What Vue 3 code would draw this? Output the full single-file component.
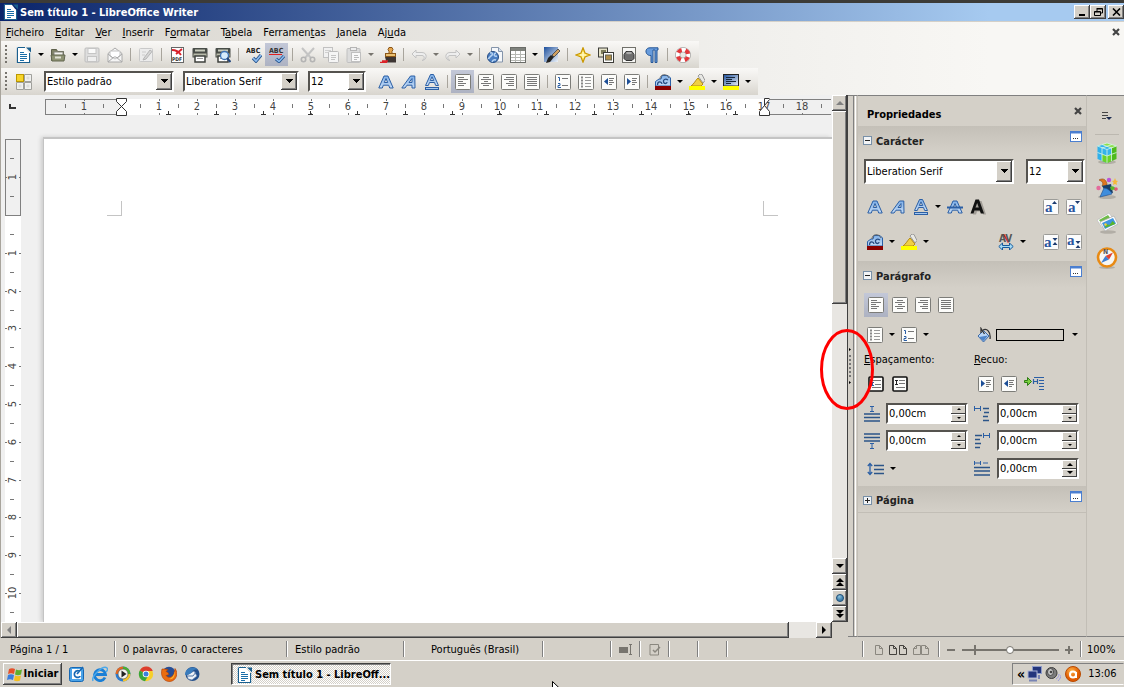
<script setup>
import { ref, h } from 'vue'

const menus = [
  ['', 'F', 'icheiro'], ['', 'E', 'ditar'], ['', 'V', 'er'], ['', 'I', 'nserir'], ['F', 'o', 'rmatar'],
  ['T', 'a', 'bela'], ['Ferramen', 't', 'as'], ['', 'J', 'anela'], ['Aj', 'u', 'da'],
]

// Letters that some icons carry over their symbol.
const sans = { 'font-weight': 700 }
const serif = { 'font-family': 'Liberation Serif, serif', 'font-weight': 700, 'font-size': 15, fill: '#2a55a0' }
const letters = {
  pdf: ['PDF', { ...sans, x: 3, y: 14, 'font-size': 5, fill: '#333' }],
  spell: ['ABC', { ...sans, x: 0, y: 6, 'font-size': 7, fill: '#222' }],
  autospell: ['ABC', { ...sans, x: 0, y: 6, 'font-size': 7, fill: '#333' }],
  spacing: ['AV', { ...sans, x: 1, y: 8, 'font-size': 10, fill: '#555' }],
  grow: ['a', { ...serif, x: 2, y: 13 }],
  shrink: ['a', { ...serif, x: 2, y: 13 }],
  super: ['a', { ...serif, x: 1, y: 13 }],
  sub: ['a', { ...serif, x: 1, y: 11 }],
  compass: ['N', { ...sans, x: 5, y: 5, 'font-size': 5, fill: '#555' }],
}
const Icon = ({ name }) => h('svg', { class: 'icon', viewBox: '0 0 16 16', 'aria-hidden': 'true' }, [
  h('use', { href: '#' + name }),
  letters[name] ? h('text', letters[name][1], letters[name][0]) : null,
])
Icon.props = ['name']

const t = (icon, label, opt = {}) => ({ icon, label, ...opt })
const sep = { sep: true }

const standardBar = [
  t('new', 'Novo', { drop: true }), t('open', 'Abrir', { drop: true }), t('save', 'Guardar', { off: true }), t('mail', 'Enviar', { off: true }), sep,
  t('edit', 'Editar modo', { off: true }), sep,
  t('pdf', 'Exportar PDF'), t('print', 'Imprimir'), t('preview', 'Pré-visualizar'), sep,
  t('spell', 'Ortografia'), t('autospell', 'Verificação automática', { on: true }), sep,
  t('cut', 'Cortar', { off: true }), t('copy', 'Copiar', { off: true }), t('paste', 'Colar', { off: true, drop: true }), t('brush', 'Clonar formatação'), sep,
  t('undo', 'Desfazer', { off: true, drop: true }), t('redo', 'Refazer', { off: true, drop: true }), sep,
  t('link', 'Hiperligação'), t('table', 'Tabela', { drop: true }), t('draw', 'Desenho'), sep,
  t('star', 'Navegador'), t('gallery', 'Galeria'), t('sources', 'Fontes de dados'), t('pilcrow', 'Caracteres não imprimíveis'), sep,
  t('help', 'Ajuda'),
]

const formatBar = [
  t('bold', 'Negrito'), t('italic', 'Itálico'), t('underline', 'Sublinhado'), sep,
  t('left', 'Esquerda', { on: true }), t('center', 'Centro'), t('right', 'Direita'), t('justify', 'Justificado'), sep,
  t('numbers', 'Numeração'), t('bullets', 'Marcas'), t('outdent', 'Diminuir recuo'), t('indent', 'Aumentar recuo'), sep,
  t('fontcolor', 'Cor do tipo de letra', { drop: true }), t('highlight', 'Realce', { drop: true }), t('backcolor', 'Cor de fundo', { drop: true }),
]

const cm = 37.8
const hNumbers = [-1, ...Array.from({ length: 18 }, (_, i) => i + 1)].map(n => ({ n: Math.abs(n), at: Math.round(121.5 + n * cm) }))
const hHalves = Array.from({ length: 21 }, (_, i) => Math.round(121.5 + (i - 1.5) * cm)).filter(v => v > 50)
const tabs = Array.from({ length: 13 }, (_, i) => Math.round(121 + (i + 1) * 47.25))
const vNumbers = [-1, 1, 2, 3, 4, 5, 6, 7, 8, 9, 10].map(n => ({ n: Math.abs(n), at: Math.round(120 + n * cm) }))
const vHalves = Array.from({ length: 13 }, (_, i) => Math.round(120 + (i - 1.5) * cm))

const decks = ['cube', 'stars', 'photos', 'compass']
const launch = ['outlook', 'ie', 'media', 'chrome', 'firefox', 'thunder']

const style = ref('Estilo padrão')
const font = ref('Liberation Serif')
const size = ref('12')
const zoom = ref(50)
const spacing = [
  ['above', 'Espaçamento acima'], ['before', 'Recuo antes'], ['below', 'Espaçamento abaixo'], ['after', 'Recuo depois'],
]
</script>

<template>
  <div class="desktop">
    <svg class="defs" aria-hidden="true">
      <defs>
        <linearGradient id="blue" x2="0" y2="1"><stop stop-color="#7fb0e8" /><stop offset="1" stop-color="#c6dcf6" /></linearGradient>
        <linearGradient id="dark" x2="1" y2="1"><stop stop-color="#1d4f9c" /><stop offset="1" stop-color="#eef4fa" /></linearGradient>
        <radialGradient id="orange" cx=".4" cy=".3"><stop stop-color="#ffb347" /><stop offset="1" stop-color="#e05a00" /></radialGradient>
        <radialGradient id="sky" cx=".4" cy=".3"><stop stop-color="#8fc4de" /><stop offset="1" stop-color="#3f80ae" /></radialGradient>
      </defs>
      <symbol id="new" viewBox="0 0 16 16"><path d="M2 .5h7M13.500 6v9.500h-12V.5" fill="#fff" stroke="#1a5f8e" stroke-width="1.300" /><path d="M2 1h7l4 5v9H2z" fill="#fff" /><path d="M10 .5h5v5z" fill="#1a5f8e" /><path d="M4 5.500h4M4 7.500h7M4 9.500h7M4 11.500h7M4 13.500h4" stroke="#1a6ea8" /></symbol>
      <symbol id="open" viewBox="0 0 16 16"><path d="M1.500 13.500v-11h5l1 2h6v9z" fill="#7d8164" stroke="#5d604b" /><rect x="4" y="5" width="9" height="5" fill="#f2f2ee" stroke="#8a8a80" /><path d="M1 8h14l-1 6H2z" fill="#8f9475" stroke="#62664f" /><path d="M5 10.500h6" stroke="#dfe0d4" stroke-width="2" /></symbol>
      <symbol id="save" viewBox="0 0 16 16"><rect x="1" y="1" width="14" height="14" rx="1" fill="#dedede" stroke="#bdbdbd" /><rect x="4" y="1.500" width="8" height="5" fill="#fafafa" stroke="#c5c5c5" /><rect x="3.500" y="9.500" width="9" height="5" fill="#efefef" stroke="#c5c5c5" /></symbol>
      <symbol id="mail" viewBox="0 0 16 16"><path d="M1 6.500 8 1l7 5.500V15H1z" fill="#f5f5f5" stroke="#aaa" /><path d="M3 4h10v5l-5 3-5-3z" fill="#fff" stroke="#c2c2c2" /><path d="m1 15 6-5h2l6 5M1 7l5 4M15 7l-5 4" fill="none" stroke="#aaa" /></symbol>
      <symbol id="edit" viewBox="0 0 16 16"><rect x="1.500" y="1.500" width="13" height="13" rx="1" fill="#ececec" stroke="#c9c9c9" /><path d="m6 11 6-8 2 1.500L8 12l-3 1z" fill="#d6d6d6" stroke="#b5b5b5" /><path d="M4 5h4M4 8h3" stroke="#ccc" /></symbol>
      <symbol id="pdf" viewBox="0 0 16 16"><rect x="2.500" y=".5" width="12" height="15" fill="#fff" stroke="#666" /><path d="M3 3c4 0 7 2 9 5m1-6-6 5" stroke="#d8202a" stroke-width="1.800" fill="none" /></symbol>
      <symbol id="print" viewBox="0 0 16 16"><rect x=".5" y="1" width="15" height="5" rx="1" fill="#484d49" /><path d="M3 3.500h10" stroke="#c9ccbd" stroke-width="2" /><rect x="1" y="6" width="14" height="4" fill="#b8bbaa" stroke="#4a4d46" /><rect x="3" y="9" width="10" height="6" fill="#fff" stroke="#3e403c" stroke-width="1.500" /><path d="M5 11.500h6" stroke="#999" /></symbol>
      <symbol id="preview" viewBox="0 0 16 16"><use href="#print" /><circle cx="9.500" cy="8.500" r="4" fill="#d6ebfb" stroke="#3b71b5" stroke-width="1.300" /><path d="m12 11 3.500 4" stroke="#23467c" stroke-width="2" /></symbol>
      <symbol id="spell" viewBox="0 0 16 16"><path d="m7 11 3 3 5-6" fill="none" stroke="#26558f" stroke-width="3.400" /><path d="m7 11 3 3 5-6" fill="none" stroke="#8ebdf0" stroke-width="1.600" /></symbol>
      <symbol id="autospell" viewBox="0 0 16 16"><path d="m0 8 1-1 1 1 1-1 1 1 1-1 1 1 1-1 1 1 1-1 1 1 1-1 1 1 1-1" fill="none" stroke="#e02020" /><path d="m7 12 3 2.500 5-5.500" fill="none" stroke="#26558f" stroke-width="3.200" /><path d="m7 12 3 2.500 5-5.500" fill="none" stroke="#8ebdf0" stroke-width="1.500" /></symbol>
      <symbol id="cut" viewBox="0 0 16 16"><path d="m2 1 9 10M14 1 5 11" stroke="#c4c4c4" stroke-width="2" /><circle cx="3.500" cy="12.500" r="2.200" fill="none" stroke="#b4b4b4" stroke-width="1.600" /><circle cx="12.500" cy="12.500" r="2.200" fill="none" stroke="#b4b4b4" stroke-width="1.600" /></symbol>
      <symbol id="copy" viewBox="0 0 16 16"><rect x=".5" y=".5" width="9" height="10" fill="#f1f1f1" stroke="#c1c1c1" /><path d="M2 3.500h6M2 5.500h6" stroke="#d0d0d0" /><rect x="5.500" y="4.500" width="10" height="11" rx="1" fill="#f5f5f5" stroke="#bcbcbc" /><path d="M8 8.500h5M8 10.500h5M8 12.500h4" stroke="#c4c4c4" /></symbol>
      <symbol id="paste" viewBox="0 0 16 16"><rect x="1" y="1.500" width="13" height="14" rx="1" fill="#dcdcdc" stroke="#c0c0c0" /><rect x="4.500" y=".5" width="6" height="3" fill="#eee" stroke="#b5b5b5" /><rect x="5.500" y="5.500" width="9" height="9" fill="#fafafa" stroke="#c0c0c0" /><path d="M8 8.500h4M8 10.500h5M8 12.500h3" stroke="#bbb" /></symbol>
      <symbol id="brush" viewBox="0 0 16 16"><path d="M9 .5h3l1 2-1 2v3H9v-3l-1-2z" fill="#e5a64d" stroke="#8b5719" /><rect x="5.500" y="6.500" width="10" height="3" fill="#eac072" stroke="#8b5719" /><path d="M5 10h11v5.500H4l2-2z" fill="#3c3432" /><path d="M0 15.500h7M2 14h6" stroke="#dc2228" stroke-width="1.500" /></symbol>
      <symbol id="undo" viewBox="0 0 16 16"><path d="M5 3 1 7l4 4V8.500h6c3 0 3 4 0 5 5 0 6-8 0-8H5z" fill="#eee" stroke="#c3c3c3" /></symbol>
      <symbol id="redo" viewBox="0 0 16 16"><use href="#undo" transform="matrix(-1 0 0 1 16 0)" /></symbol>
      <symbol id="link" viewBox="0 0 16 16"><path d="M4.500 15V.5h7l4 4V15z" fill="#f5f7fa" stroke="#8494aa" /><path d="M11.500.5v4h4" fill="#d6dfeb" stroke="#8494aa" /><circle cx="6" cy="10" r="5.500" fill="#4b7ec2" stroke="#274d83" /><path d="M3 6c3-1 3 2 1 3s-1 3-3 2m8-5c-3 1-2 4 1 3m-5 6c1-3 4-2 4-2" fill="none" stroke="#b7d4f3" stroke-width="1.400" /></symbol>
      <symbol id="table" viewBox="0 0 16 16"><rect x=".5" y=".5" width="15" height="15" fill="#fff" stroke="#6a6c68" /><path d="M1 2.500h14" stroke="#7f827c" stroke-width="3" /><path d="M1 7.500h14M1 10.500h14M1 13.500h14M5.500 4v11M10.500 4v11" stroke="#b5b7b2" /></symbol>
      <symbol id="draw" viewBox="0 0 16 16"><rect x="0" y="0" width="14" height="15" fill="url(#dark)" /><path d="m8 8 6-6 2 2-6 6z" fill="#d0a060" stroke="#555" /><path d="m7 8 3 2-4 5-4 1 2-5z" fill="#222" /></symbol>
      <symbol id="star" viewBox="0 0 16 16"><path d="m8 .8 2 5.200 5.200 2-5.200 2-2 5.200L6 10 .8 8 6 6z" fill="#ffe868" stroke="#c99700" stroke-width="1.200" /><path d="M8 5v6M5 8h6" stroke="#fffbd5" /></symbol>
      <symbol id="gallery" viewBox="0 0 16 16"><rect x=".5" y="1" width="9" height="9" fill="#e5e2c8" stroke="#3c3c38" /><rect x="3" y="3" width="5" height="4" fill="#7d7c5a" /><rect x="5.500" y="5.500" width="10" height="10" fill="#fff" stroke="#3c3c38" /><rect x="7.500" y="8" width="6" height="5" fill="#b08d46" stroke="#665" /></symbol>
      <symbol id="sources" viewBox="0 0 16 16"><rect x="1.500" y=".5" width="13" height="15" fill="#f7f7f5" stroke="#70706a" /><path d="M5 4.500h6l2 3v4l-2 2H5l-2-2v-4z" fill="#6e6e6e" stroke="#333" /><ellipse cx="8" cy="6" rx="3" ry="1.300" fill="#aaa" /></symbol>
      <symbol id="pilcrow" viewBox="0 0 16 16"><path d="M14 .8H6C0 .8 1 9 7 8.500V15.500h2V3h2v12.500h2V3h1z" fill="#679bdc" stroke="#265796" /></symbol>
      <symbol id="help" viewBox="0 0 16 16"><circle cx="8" cy="8" r="5.300" fill="none" stroke="#8a8a8a" stroke-width="5" /><circle cx="8" cy="8" r="5.300" fill="none" stroke="#fff" stroke-width="4" /><circle cx="8" cy="8" r="5.300" fill="none" stroke="#e2383b" stroke-width="4" stroke-dasharray="4.300 4.025" stroke-dashoffset="-2" /></symbol>
      <symbol id="styles" viewBox="0 0 16 16"><rect x=".5" y=".5" width="7" height="7" fill="#f7d42a" stroke="#bb9800" /><g fill="#f1f1ef" stroke="#a0a09c"><path d="M8.500.5h7v7h-7zM.5 8.500h7v7h-7zM8.500 8.500h7v7h-7z" /></g><path d="M10.500 2.500h3v3h-3zM2.500 10.500h3v3h-3zM10.500 10.500h3v3h-3z" fill="#dddddb" /></symbol>
      <symbol id="bold" viewBox="0 0 16 16"><path d="M.8 14 6 2h4l5.200 12h-3.500l-1-2.800H5.300L4.300 14z M6.300 8.500h3.400L8 4.500z" fill="url(#blue)" fill-rule="evenodd" stroke="#2b5fa5" /></symbol>
      <symbol id="italic" viewBox="0 0 16 16"><path d="M.8 14 9.500 2h4.300l.2 12h-3v-2.800H6L4 14z M8 8.500h3V4.500z" fill="url(#blue)" fill-rule="evenodd" stroke="#2b5fa5" /></symbol>
      <symbol id="underline" viewBox="0 0 16 16"><path d="M1.500 11.500 6.500.5h3l5 11h-2.800l-1.200-3h-5l-1.200 3z M6.300 6.500h3.400L8 2.800z" fill="url(#blue)" fill-rule="evenodd" stroke="#2b5fa5" /><rect x="1.500" y="13.500" width="13" height="2" fill="#a5c8f0" stroke="#2b5fa5" /></symbol>
      <symbol id="strike" viewBox="0 0 16 16"><use href="#bold" /><path d="M0 8.500h16" stroke="#2b5fa5" stroke-width="2" /></symbol>
      <symbol id="shadow" viewBox="0 0 16 16"><path d="M3 15.500 7.500 2h4L16 15.500h-3l-1-3H7l-1 3z" fill="#a19d96" /><path d="M.5 14.500 5.500.5H9l5 14h-3.200l-1-3H4.500l-1 3z M5.500 8.500h3.300L7.200 4z" fill="#111" fill-rule="evenodd" /></symbol>
      <symbol id="frame" viewBox="0 0 16 16"><rect x=".5" y=".5" width="15" height="15" rx="1" fill="#fcfcfa" stroke="#7c7c78" /></symbol>
      <symbol id="left" viewBox="0 0 16 16"><use href="#frame" /><path d="M3 3.500h6M3 5.500h10M3 7.500h5M3 9.500h8M3 11.500h6" stroke="#777" /></symbol>
      <symbol id="center" viewBox="0 0 16 16"><use href="#frame" /><path d="M5 3.500h6M3 5.500h10M6 7.500h4M3 9.500h10M5 11.500h6" stroke="#777" /></symbol>
      <symbol id="right" viewBox="0 0 16 16"><use href="#frame" /><path d="M5 3.500h8M3 5.500h10M8 7.500h5M5 9.500h8M7 11.500h6" stroke="#777" /></symbol>
      <symbol id="justify" viewBox="0 0 16 16"><use href="#frame" /><path d="M3 3.500h10M3 5.500h10M3 7.500h10M3 9.500h10M3 11.500h10" stroke="#777" /></symbol>
      <symbol id="numbers" viewBox="0 0 16 16"><use href="#frame" /><path d="M3 3.500h1.500V7M3 9.500h2v2H3v2h3" fill="none" stroke="#2b5fa5" /><path d="M7 4.500h6M7 11.500h6" stroke="#777" /></symbol>
      <symbol id="bullets" viewBox="0 0 16 16"><use href="#frame" /><path d="M3 3.500h2M3 6.500h2M3 9.500h2M3 12.500h2" stroke="#888" stroke-width="2" /><path d="M7 3.500h6M7 6.500h6M7 9.500h6M7 12.500h6" stroke="#999" /></symbol>
      <symbol id="outdent" viewBox="0 0 16 16"><use href="#frame" /><path d="M7 4v7L3 7.500z" fill="#1c4e96" /><path d="M8 4.500h5M8 6.500h4M8 8.500h5M8 10.500h3" stroke="#777" /></symbol>
      <symbol id="indent" viewBox="0 0 16 16"><use href="#frame" /><path d="M3 4v7l4-3.500z" fill="#1c4e96" /><path d="M8 4.500h5M8 6.500h4M8 8.500h5M8 10.500h3" stroke="#777" /></symbol>
      <symbol id="fontcolor" viewBox="0 0 16 16"><path d="M.5 12V7.500L4 5h2l1-3.500h6L15.500 4v8z" fill="url(#blue)" stroke="#2b5fa5" /><path d="M2.500 11c0-4 4-4 4.500-1M13 6c-3-2-5 0-4.500 2s3.500 2 3.500 0" fill="none" stroke="#274c83" stroke-width="1.300" /><path d="M5 5c0-5 7-6 9-1" fill="none" stroke="#666" /><rect y="12" width="16" height="4" fill="#8a0000" /></symbol>
      <symbol id="highlight" viewBox="0 0 16 16"><path d="m9 2 2-2 2 .5 3 6-2 2.500z" fill="#e8e8e4" stroke="#999" /><path d="m9 4 5 6-2 2H2c3-2 4-5 7-8z" fill="#f0d045" stroke="#b58a10" /><rect y="12" width="16" height="4" fill="#ff0" /></symbol>
      <symbol id="backcolor" viewBox="0 0 16 16"><rect x=".5" y=".5" width="15" height="11.500" fill="url(#dark)" stroke="#222" /><path d="M3 3.500h9M3 5.500h6M3 7.500h10M3 9.500h5" stroke="#17273c" /><rect y="12" width="16" height="4" fill="#ff0" /></symbol>
      <symbol id="spacing" viewBox="0 0 16 16"><path d="m5.500 0 5 8.500" stroke="#e32020" stroke-width="1.500" /><path d="M.8 12.500 4.500 9v2.500h7V9l3.700 3.500-3.700 3.500v-2.500h-7V16z" fill="#a6dbf5" stroke="#165a9c" /></symbol>
      <symbol id="grow" viewBox="0 0 16 16"><use href="#box" /><path d="M9 5 11.500 2 14 5z" fill="#1d3c70" /></symbol>
      <symbol id="shrink" viewBox="0 0 16 16"><use href="#box" /><path d="M9 2h5l-2.500 3z" fill="#1d3c70" /></symbol>
      <symbol id="super" viewBox="0 0 16 16"><use href="#box" /><path d="M9.500 4h5L12 7zM9.500 11h5L12 8z" fill="#1d3c70" /></symbol>
      <symbol id="sub" viewBox="0 0 16 16"><use href="#box" /><path d="M9.500 7h5L12 10zM9.500 14h5L12 11z" fill="#1d3c70" /></symbol>
      <symbol id="box" viewBox="0 0 16 16"><rect x=".5" y=".5" width="15" height="15" rx="1" fill="#fcfcfc" stroke="#9c9c98" /></symbol>
      <symbol id="bucket" viewBox="0 0 16 16"><path d="m2 9 5.500-5.500L13 9l-5.500 6z" fill="#b9d5f5" stroke="#3c6aa8" /><path d="m3 10 9-1.500-4.500 5.500z" fill="#4c83c8" /><path d="M5 6V1.500L8.500 7M7 3c4-2 8 2 7 9" fill="none" stroke="#333" stroke-width="1.300" /></symbol>
      <symbol id="inc" viewBox="0 0 16 16"><rect x="1" y="1" width="14" height="14" rx="1" fill="#fcfcfa" stroke="#111" stroke-width="1.600" /><path d="M4 4.500h9M7 8.500h6M4 11.500h9" stroke="#777" /><path d="M3 6.500h3M3 9.500h3M4.500 6v4" stroke="#2b5fa5" /></symbol>
      <symbol id="dec" viewBox="0 0 16 16"><rect x="1" y="1" width="14" height="14" rx="1" fill="#fcfcfa" stroke="#111" stroke-width="1.600" /><path d="M7 4.500h6M7 7.500h6M4 11.500h9" stroke="#777" /><path d="M3 4.500h3M3 8.500h3M4.500 5v4" stroke="#222" /></symbol>
      <symbol id="hanging" viewBox="0 0 20 16"><path d="M.5 4.500h3V1.500l4 4-4 4V6.500h-3z" fill="#7bd13f" stroke="#2f7d15" /><path d="M9.500 3v5M13.500 3v5M10 5.500h3M10 1.500h10M15 4.500h5M15 7.500h5M15 10.500h5M15 13.500h5" stroke="#2b5fa5" stroke-width="1.200" /></symbol>
      <symbol id="above" viewBox="0 0 16 16"><path d="M6 .5h4M6 5.500h4M8 1v5" stroke="#2b5fa5" /><path d="M0 8h16M0 11.500h16M0 15h16" stroke="#2b5488" stroke-width="1.600" /></symbol>
      <symbol id="below" viewBox="0 0 16 16"><path d="M6 10.500h4M6 15.500h4M8 11v5" stroke="#2b5fa5" /><path d="M0 1h16M0 4.500h16M0 8h16" stroke="#2b5488" stroke-width="1.600" /></symbol>
      <symbol id="before" viewBox="0 0 16 16"><path d="M.5 0v5M6.500 0v5M1 2.500h6" stroke="#2b5fa5" /><path d="M9 2.500h6M10 6.500h5M9 10.500h5M9 14.500h6" stroke="#2b5488" stroke-width="1.500" /></symbol>
      <symbol id="after" viewBox="0 0 16 16"><path d="M9.500 0v5M15.500 0v5M10 2.500h6" stroke="#2b5fa5" /><path d="M1 2.500h7M1 6.500h5M1 10.500h6M1 14.500h5" stroke="#2b5488" stroke-width="1.500" /></symbol>
      <symbol id="first" viewBox="0 0 16 16"><path d="M.5 0v4M6.500 0v4M1 2h6M9 2h5" stroke="#2b5fa5" /><path d="M0 6.500h16M0 10h16M0 14h16" stroke="#2b5488" stroke-width="1.500" /></symbol>
      <symbol id="linesp" viewBox="0 0 18 16"><path d="M3 3v10M.8 5 3 2.500 5.200 5M.8 11 3 13.500 5.200 11" fill="none" stroke="#2b5fa5" stroke-width="1.300" /><path d="M7 4.500h10M7 8.500h10M7 12.500h10" stroke="#2b5488" stroke-width="1.500" /></symbol>
      <symbol id="launch" viewBox="0 0 12 11"><rect x=".5" y=".5" width="11" height="10" fill="#fff" stroke="#4b7fd0" /><path d="M0 1.500h12" stroke="#4b7fd0" stroke-width="2" /><path d="M3 7.500h1m1 0h1m1 0h1" stroke="#333" /></symbol>
      <symbol id="cross" viewBox="0 0 8 8"><path d="m1 1 6 6M7 1 1 7" stroke="#444" stroke-width="2.200" /></symbol>
      <symbol id="deckmenu" viewBox="0 0 10 10"><path d="M0 1.500h6M0 4.500h6M0 7.500h4" stroke="#444" /><path d="M4 6h6L7 9z" fill="#1b2b50" /></symbol>
      <symbol id="cube" viewBox="0 0 22 22"><ellipse cx="11" cy="20" rx="9" ry="2" fill="#b2aea6" /><path d="m1.500 4 9.500-3 9.500 3-9.500 3.500z" fill="#8fe04c" /><path d="M1.500 4v13l9.500 4V7.500z" fill="#2fb0ea" /><path d="m20.500 4-9.500 3.500V21l9.500-4z" fill="#4ebb1c" /><path d="M1.500 4 6 2.500l9.500 3.500v6.500L11 14z" fill="#35b3ec" /><path d="m11 14 4.500-2v7L11 21l-5-2v-7z" fill="#6ad22c" /><path d="m1.500 4 9.500-3 9.500 3-9.500 3.500zM11 7.500V21M1.500 10.500 11 14l9.500-3.500M6 5.500v13.500M15.500 5.500v13.500M6 2.500 15.500 6M16 2.500 6 6" fill="none" stroke="#d8f5ea" stroke-width=".8" /></symbol>
      <symbol id="stars" viewBox="0 0 22 22"><ellipse cx="11" cy="20" rx="9" ry="2" fill="#b2aea6" /><path d="M3 3c5-3 8 1 8 5L6 9C8 6 6 4 3 3z" fill="#e07820" stroke="#8c4810" stroke-width=".6" /><path d="m6 9 9-2 2 9-7-1z" fill="#173f68" /><path d="m4 20 4-9c3 0 7 3 8 6z" fill="#3f8ddc" stroke="#1c4a88" stroke-width=".6" /><path d="M14 10c4-2 6 1 6 4-2-2-4-1-5-1z" fill="#58b72c" /><circle cx="13" cy="3" r="2.200" fill="#bb55d8" /><path d="m19 1 1 2.500 2 .5-1.500 1.500.5 2.500-2-1-2 1 .5-2.500L16 4l2-.5z" fill="#f5b83a" /><circle cx="2.500" cy="11" r="2.200" fill="#e46a9c" /><circle cx="20" cy="12" r="1.800" fill="#e2557a" /></symbol>
      <symbol id="photos" viewBox="0 0 22 22"><ellipse cx="12" cy="20" rx="8" ry="1.800" fill="#b2aea6" /><path d="m1 8 12-7 6 8-13 7z" fill="#fdfdfd" stroke="#bbb" stroke-width=".7" /><path d="m3 8 9-5 3 4-9 5z" fill="#6fbb4a" /><path d="m4 10 14-6 4 8-13 7z" fill="#fdfdfd" stroke="#aaa" stroke-width=".7" /><path d="m6 11 11-5 3 5.500-11 5.500z" fill="#3f95e0" /><path d="m8.500 16 2-4 3 1 3-4 3 3z" fill="#5ab52a" /><path d="m8 12 2-1 1 2-2 1z" fill="#f4d040" /></symbol>
      <symbol id="compass" viewBox="0 0 22 22"><ellipse cx="11" cy="20.500" rx="8" ry="1.500" fill="#b2aea6" /><circle cx="11" cy="10.500" r="9" fill="#f6f6f4" stroke="#e88a14" stroke-width="2.600" /><path d="m17 5.500-4 7-3.500-3.500z" fill="#e04030" /><path d="m5 16 4.500-7 3.500 3.500z" fill="#3d7ed0" /></symbol>
      <symbol id="outlook" viewBox="0 0 16 16"><rect x=".5" y="1.500" width="14" height="14" rx="2" fill="#4aa3e8" stroke="#1768b4" /><rect x="3" y="3" width="9" height="10" fill="#fff" /><path d="M11 5c-6-2-7 5-4 6 2 1 4 0 4-1M8 8l6-7" fill="none" stroke="#1768b4" stroke-width="1.700" /></symbol>
      <symbol id="ie" viewBox="0 0 16 16"><path d="M13 11.500A5.500 5.500 0 1 1 13.500 8.500H4" fill="none" stroke="#1a7fd6" stroke-width="2.800" /><path d="M1 15C-1 10 11-1 15 2c1 1 0 3-1 4" fill="none" stroke="#4ba8ea" stroke-width="1.500" /></symbol>
      <symbol id="media" viewBox="0 0 16 16"><circle cx="8" cy="8" r="7.500" fill="#2b7bd0" /><path d="M8 8V.5A7.500 7.500 0 0 1 15.500 8z" fill="#4cb030" /><path d="M8 8h7.500A7.500 7.500 0 0 1 8 15.500z" fill="#f5c32a" /><path d="M8 8H.5A7.500 7.500 0 0 1 8 .5z" fill="#e56820" /><circle cx="8" cy="8" r="5" fill="#f4f4ef" stroke="#555" stroke-width=".7" /><path d="m6.500 4.500 5 3.500-5 3.500z" fill="#222" /></symbol>
      <symbol id="chrome" viewBox="0 0 16 16"><circle cx="8" cy="8" r="7.200" fill="#f7cf2a" /><path d="M8 8 1.800 4.400A7.200 7.200 0 0 1 14.800 5H8z" fill="#dc3e2e" /><path d="m8 8-6.200-3.600A7.200 7.200 0 0 0 7 15.200L10 10z" fill="#36a53e" /><circle cx="8" cy="8" r="3.300" fill="#fff" /><circle cx="8" cy="8" r="2.500" fill="#3c80dd" /></symbol>
      <symbol id="firefox" viewBox="0 0 16 16"><circle cx="8" cy="7.500" r="6.800" fill="#274e95" /><path d="M1 3c-2 7 2 13 8 12.500 6-.5 9-8 5-13 0 3-1 3-1 5-1 4-6 5-8 2l3-1-1-2-2-1 2-2C5 3 3 3 1 3z" fill="#ea6d10" stroke="#b03c04" stroke-width=".6" /><path d="M12 2c3 5 0 10-4 11 4 1 8-3 4-11z" fill="#fbb630" /></symbol>
      <symbol id="thunder" viewBox="0 0 16 16"><circle cx="8.500" cy="8" r="7" fill="#234f8c" /><path d="m3 9 7-4 3 5-5 4-4-1z" fill="#eef2f8" stroke="#5576a4" stroke-width=".7" /><path d="M1 9c0-7 8-10 13-5-3-1-5 0-6 2S4 9 1 9z" fill="#3a7cbc" /><path d="m4 10 5 0 3-4" fill="none" stroke="#5576a4" /></symbol>
      <symbol id="windows" viewBox="0 0 16 16"><path d="M2 3c2-1 4-1 6 0L7 8C5 7 3 7 1 8z" fill="#e5502a" /><path d="M9 3.500c2 1 4 1 6 0l-1 5c-2 1-4 1-6 0z" fill="#5fae2c" /><path d="M1 9c2-1 4-1 6 0l-1 5c-2-1-4-1-6 0z" fill="#3b7ddc" /><path d="M8 9.500c2 1 4 1 6 0l-1 5c-2 1-4 1-6 0z" fill="#f5bf1e" /></symbol>
      <symbol id="network" viewBox="0 0 16 16"><rect x="5.500" y=".5" width="9" height="7" fill="#23357c" stroke="#8f9cc8" /><rect x="1" y="5" width="9" height="7" fill="#23357c" stroke="#aab3d8" /><path d="M2 14.500h8M12 9v4" stroke="#7984b4" stroke-width="2" /></symbol>
      <symbol id="speaker" viewBox="0 0 16 16"><circle cx="6.500" cy="7" r="5.500" fill="#7c7c7c" stroke="#3e3e3e" /><ellipse cx="5.500" cy="6" rx="3" ry="3.500" fill="#c7c7c7" stroke="#4a4a4a" /><circle cx="6" cy="6" r="1.300" fill="#444" /><path d="M11 13c2-1 3-3 3-5M13 15c2-2 3-4 3-6" fill="none" stroke="#9c9ce0" /></symbol>
      <symbol id="avast" viewBox="0 0 16 16"><circle cx="8" cy="8" r="7.500" fill="url(#orange)" stroke="#b84a00" /><circle cx="8" cy="8.500" r="3" fill="none" stroke="#fff" stroke-width="2" /><path d="M11 6v6" stroke="#fff" stroke-width="2" /></symbol>
    </svg>

    <header class="titlebar">
      <Icon name="new" />
      <h1>Sem título 1 - LibreOffice Writer</h1>
      <div class="controls">
        <button aria-label="Minimizar"><svg viewBox="0 0 9 8"><path d="M1 7h6" stroke="#000" stroke-width="2" /></svg></button>
        <button aria-label="Restaurar"><svg viewBox="0 0 9 8"><path d="M3 .5h5.500V5H6.500M3 1h5.500M3 0v3M.5 3.500h6v4h-6zM.5 4h6" fill="none" stroke="#000" /></svg></button>
        <button aria-label="Fechar" class="shut"><svg viewBox="0 0 9 8"><path d="m1 .5 7 7M8 .5l-7 7" stroke="#000" stroke-width="1.600" /></svg></button>
      </div>
    </header>

    <section class="chrome">
      <nav class="menubar">
        <a v-for="m in menus" :key="m[1] + m[2]" href="#">{{ m[0] }}<u>{{ m[1] }}</u>{{ m[2] }}</a>
        <button class="bare closedoc" aria-label="Fechar documento"><svg class="cross"><use href="#cross" /></svg></button>
      </nav>

      <div class="toolbar" role="toolbar" aria-label="Padrão">
        <i class="grip"></i>
        <template v-for="(b, i) in standardBar" :key="i">
          <i v-if="b.sep" class="sep"></i>
          <template v-else>
            <button class="tool" :class="{ on: b.on }" :aria-label="b.label" :disabled="b.off"><Icon :name="b.icon" /></button>
            <button v-if="b.drop" class="drop" :class="{ off: b.off }" :aria-label="b.label + ', opções'"></button>
          </template>
        </template>
      </div>

      <div class="toolbar" role="toolbar" aria-label="Formatação">
        <i class="grip"></i>
        <button class="tool" aria-label="Estilos"><Icon name="styles" /></button>
        <div class="combo w-style"><select v-model="style" aria-label="Estilo de parágrafo"><option>Estilo padrão</option></select></div>
        <div class="combo w-font"><select v-model="font" aria-label="Tipo de letra"><option>Liberation Serif</option></select></div>
        <div class="combo w-size"><select v-model="size" aria-label="Tamanho"><option>12</option></select></div>
        <template v-for="(b, i) in formatBar" :key="i">
          <i v-if="b.sep" class="sep"></i>
          <template v-else>
            <button class="tool" :class="{ on: b.on }" :aria-label="b.label"><Icon :name="b.icon" /></button>
            <button v-if="b.drop" class="drop" :aria-label="b.label + ', opções'"></button>
          </template>
        </template>
      </div>
    </section>

    <main class="work">
      <div class="editor">
        <div class="canvas">
          <svg class="hruler" aria-label="Régua horizontal">
            <rect x="121" y="4" width="644" height="16" fill="#fff" />
            <rect x="45.500" y="4.500" width="76" height="15" class="margin" />
            <rect x="764.500" y="4.500" width="120" height="15" class="margin" />
            <path class="stop" d="M10 9v4h6" />
            <g v-for="k in hNumbers" :key="k.at"><text :x="k.at" y="15">{{ k.n }}</text><path :d="`M${k.at + .5} 4v2m0 12v2`" /></g>
            <path v-for="x in hHalves" :key="x" :d="`M${x + .5} 9v4`" />
            <path v-for="x in tabs" :key="x" class="tab" :d="`M${x - 2} 19.500h5M${x + .5} 16v3`" />
            <path class="marker" d="M116.500 3.500h10v3l-10 10v4h10v-4l-10-10z" />
            <path class="marker" d="M764.500 10.500l5 6v4h-10v-4zM769.500 3.500h-5v7l5-6" />
          </svg>
          <svg class="vruler" aria-label="Régua vertical">
            <rect x="4" y="120" width="16" height="600" fill="#fff" />
            <rect x="4.500" y="44.500" width="15" height="76" class="margin" />
            <g v-for="k in vNumbers" :key="k.at"><text :transform="`translate(15 ${k.at}) rotate(-90)`">{{ k.n }}</text><path :d="`M4 ${k.at + .5}h2m12 0h2`" /></g>
            <path v-for="y in vHalves" :key="y" :d="`M9 ${y + .5}h4`" />
          </svg>
          <article class="page" contenteditable="true" aria-label="Documento">
            <i class="crop tl"></i><i class="crop tr"></i>
          </article>
        </div>
        <div class="vscroll">
          <button class="sb off" aria-label="Subir"><svg viewBox="0 0 8 4"><path d="m0 4 4-4 4 4z" fill="#808080" /></svg></button>
          <div class="thumb vt"></div>
          <i class="track"></i>
          <button class="sb" aria-label="Descer"><svg viewBox="0 0 8 4"><path d="m0 0 4 4 4-4z" /></svg></button>
          <button class="sb" aria-label="Página anterior"><svg class="tall" viewBox="0 0 8 8"><path d="m0 4 4-4 4 4zM0 8l4-4 4 4z" /></svg></button>
          <button class="sb" aria-label="Navegação"><svg class="tall" viewBox="0 0 8 8"><circle cx="4" cy="4" r="3.500" fill="url(#sky)" stroke="#234e74" /></svg></button>
          <button class="sb" aria-label="Página seguinte"><svg class="tall" viewBox="0 0 8 8"><path d="m0 0 4 4 4-4zM0 4l4 4 4-4z" /></svg></button>
        </div>
        <div class="hscroll">
          <button class="sb" aria-label="Esquerda"><svg class="side" viewBox="0 0 4 8"><path d="M4 0 0 4l4 4z" fill="#808080" /></svg></button>
          <div class="thumb ht"></div>
          <i class="track"></i>
          <button class="sb" aria-label="Direita"><svg class="side" viewBox="0 0 4 8"><path d="m0 0 4 4-4 4z" /></svg></button>
        </div>
      </div>

      <div class="splitter"><svg viewBox="0 0 4 36"><path d="M1 0l2 1.500L1 3zM1 33l2 1.500L1 36z" /><path d="M2 7v24" stroke="#777" stroke-width="2" stroke-dasharray="2 2" /></svg></div>

      <aside class="deck">
        <div class="deckhead"><h2>Propriedades</h2><button class="bare" aria-label="Fechar painel"><svg class="cross"><use href="#cross" /></svg></button></div>

        <div class="head"><button class="toggle" aria-label="Recolher"></button><h3>Carácter</h3><button class="bare more" aria-label="Mais opções"><svg><use href="#launch" /></svg></button></div>
        <div class="panel chars">
          <div class="row fonts">
            <div class="combo big grow"><select v-model="font" aria-label="Tipo de letra"><option>Liberation Serif</option></select></div>
            <div class="combo big w-size2"><select v-model="size" aria-label="Tamanho"><option>12</option></select></div>
          </div>
          <div class="row tools">
            <button class="tool" aria-label="Negrito"><Icon name="bold" /></button>
            <button class="tool" aria-label="Itálico"><Icon name="italic" /></button>
            <button class="tool" aria-label="Sublinhado"><Icon name="underline" /></button><button class="drop" aria-label="Opções de sublinhado"></button>
            <button class="tool" aria-label="Rasurado"><Icon name="strike" /></button>
            <button class="tool" aria-label="Sombra"><Icon name="shadow" /></button>
            <button class="tool push" aria-label="Aumentar"><Icon name="grow" /></button>
            <button class="tool" aria-label="Diminuir"><Icon name="shrink" /></button>
          </div>
          <div class="row tools">
            <button class="tool" aria-label="Cor"><Icon name="fontcolor" /></button><button class="drop" aria-label="Opções de cor"></button>
            <button class="tool" aria-label="Realce"><Icon name="highlight" /></button><button class="drop" aria-label="Opções de realce"></button>
            <button class="tool push" aria-label="Espaçamento"><Icon name="spacing" /></button><button class="drop kern" aria-label="Opções de espaçamento"></button>
            <button class="tool" aria-label="Sobrescrito"><Icon name="super" /></button>
            <button class="tool" aria-label="Subscrito"><Icon name="sub" /></button>
          </div>
        </div>

        <div class="head"><button class="toggle" aria-label="Recolher"></button><h3>Parágrafo</h3><button class="bare more" aria-label="Mais opções"><svg><use href="#launch" /></svg></button></div>
        <div class="panel para">
          <div class="row aligns">
            <button class="tool on" aria-label="Esquerda"><Icon name="left" /></button>
            <button class="tool" aria-label="Centro"><Icon name="center" /></button>
            <button class="tool" aria-label="Direita"><Icon name="right" /></button>
            <button class="tool" aria-label="Justificado"><Icon name="justify" /></button>
          </div>
          <div class="halves lists">
            <div class="row nudge"><button class="tool" aria-label="Marcas"><Icon name="bullets" /></button><button class="drop" aria-label="Opções de marcas"></button><button class="tool" aria-label="Numeração"><Icon name="numbers" /></button><button class="drop" aria-label="Opções de numeração"></button></div>
            <div class="row"><button class="tool narrow" aria-label="Fundo do parágrafo"><Icon name="bucket" /></button><i class="swatch"></i><button class="drop wide" aria-label="Opções de fundo"></button></div>
          </div>
          <div class="halves captions"><span><u>E</u>spaçamento:</span><span><u>R</u>ecuo:</span></div>
          <div class="halves spaces">
            <div class="row"><button class="tool first" aria-label="Aumentar espaçamento"><Icon name="inc" /></button><button class="tool" aria-label="Diminuir espaçamento"><Icon name="dec" /></button></div>
            <div class="row"><button class="tool" aria-label="Aumentar recuo"><Icon name="indent" /></button><button class="tool" aria-label="Diminuir recuo"><Icon name="outdent" /></button><button class="tool hang" aria-label="Recuo pendente"><svg><use href="#hanging" /></svg></button></div>
          </div>
          <div class="fields">
            <template v-for="s in spacing" :key="s[0]">
              <Icon :name="s[0]" />
              <div class="spin"><input value="0,00cm" :aria-label="s[1]"><div><button class="up" aria-label="Mais"></button><button aria-label="Menos"></button></div></div>
            </template>
            <div class="row linesp"><button class="bare" aria-label="Espaçamento de linhas"><svg><use href="#linesp" /></svg></button><button class="drop" aria-label="Opções de linhas"></button></div>
            <Icon name="first" />
            <div class="spin strong"><input value="0,00cm" aria-label="Recuo da primeira linha"><div><button class="up" aria-label="Mais"></button><button aria-label="Menos"></button></div></div>
          </div>
        </div>

        <div class="head last"><button class="toggle plus" aria-label="Expandir"></button><h3>Página</h3><button class="bare more" aria-label="Mais opções"><svg><use href="#launch" /></svg></button></div>
      </aside>

      <nav class="decktabs">
        <button class="bare menu" aria-label="Definições"><svg><use href="#deckmenu" /></svg></button>
        <button v-for="d in decks" :key="d" class="bare" :aria-label="d"><Icon :name="d" /></button>
      </nav>

      <svg class="highlight" viewBox="0 0 54 81" aria-hidden="true"><ellipse cx="27" cy="40.500" rx="25.500" ry="39" fill="none" stroke="#f00" stroke-width="3" /></svg>
    </main>

    <footer class="status">
      <span class="s-page">Página 1 / 1</span><span class="s-words">0 palavras, 0 caracteres</span><span class="s-style">Estilo padrão</span>
      <span class="s-lang">Português (Brasil)</span><span class="s-gap"></span>
      <span class="s-cell"><svg viewBox="0 0 14 12"><path d="M0 3h9v6H0z" fill="#77746e" /><path d="M10 .5h3M10 10.500h3M11.500 1v10" stroke="#77746e" /></svg></span>
      <span class="s-cell"><svg viewBox="0 0 14 12"><path d="M2 .5h8.500v10.500H2z" fill="none" stroke="#8a877f" /><path d="m5 6 2 2 5-5" fill="none" stroke="#8a877f" stroke-width="1.500" /></svg></span>
      <span class="s-cell"></span><span class="s-cell"></span><span class="s-rest"></span>
      <span class="s-views"><svg viewBox="0 0 54 12" fill="none" stroke="#8a877f"><path d="M.5 1.500h4l3 3v6h-7zM4.500 1.500v3h3" /><path d="M14.500 1.500h4l3 3v6h-7zM18.500 1.500v3h3M24.500 1.500h4l3 3v6h-7zM28.500 1.500v3h3" stroke="#44423e" /><path d="M38.500 4.500l3-3h4v9h-7zM41.500 1.500v3h-3M46.500 1.500h4l3 3v6h-7zM50.500 1.500v3h3" /></svg></span>
      <span class="s-zoom"><button class="bare minus" aria-label="Reduzir"></button><input v-model="zoom" type="range" min="0" max="100" aria-label="Ampliação"><button class="bare plus" aria-label="Ampliar"></button></span>
      <span class="s-pct">100%</span>
    </footer>

    <footer class="taskbar">
      <button class="start"><Icon name="windows" />Iniciar</button>
      <div class="launch"><button v-for="l in launch" :key="l" class="bare" :aria-label="l"><Icon :name="l" /></button></div>
      <button class="task"><Icon name="new" /><span>Sem título 1 - LibreOff...</span></button>
      <div class="tray"><span class="chev">«</span><Icon name="network" /><Icon name="speaker" /><Icon name="avast" /><time>13:06</time></div>
      <svg class="pointer" viewBox="0 0 12 18" aria-hidden="true"><path d="M.5.5v14l3.500-3 2.500 5 2-1-2.500-5H11z" fill="#fff" stroke="#000" /></svg>
    </footer>
  </div>
</template>

<style>
html, body { overflow: hidden; }
</style>

<style scoped>
.desktop {
  --face: #d4d0c8;
  position: relative;
  display: flex;
  flex-direction: column;
  min-height: 100vh;
  box-sizing: border-box;
  overflow: hidden;
  border-top: 3px solid #3c3b37;
  background: var(--face);
  font: 11px/14px "DejaVu Sans Condensed", "DejaVu Sans", sans-serif;
  color: #000;
}
.desktop *, .desktop *::before, .desktop *::after { box-sizing: border-box; }
.defs { position: absolute; width: 0; height: 0; }
h1, h2, h3 { margin: 0; font-size: 11px; font-weight: 700; }
i { font-style: normal; }
button, input, select { font: inherit; color: inherit; margin: 0; padding: 0; border: 0; background: none; border-radius: 0; }
button { display: inline-flex; align-items: center; justify-content: center; flex: none; }
.desktop :deep(.icon) { width: 16px; height: 16px; flex: none; display: block; }
.cross { width: 8px; height: 8px; display: block; }

.titlebar { display: flex; align-items: center; height: 18px; padding: 0 0 0 3px; background: linear-gradient(90deg, #0a246a, #a6caf0 88%); color: #fff; }
.titlebar h1 { margin-left: 1px; padding-top: 1px; }
.controls { display: flex; margin-left: auto; }
.controls button { width: 16px; height: 14px; background: var(--face); box-shadow: inset -1px -1px #404040, inset 1px 1px #fff, inset -2px -2px #808080; }
.controls svg { width: 9px; height: 8px; }
.controls .shut { margin-left: 2px; }

.chrome { background: linear-gradient(90deg, #d8d5ce, #f0efec 65%, #f8f7f4 88%); border-top: 1px solid #d4d0c8; border-left: 1px solid #a8a49c; }
.menubar { display: flex; align-items: center; gap: 11px; height: 19px; padding: 2px 4px 0 5px; }
.menubar a { color: #000; text-decoration: none; }
.closedoc { margin: 0 0 2px auto; }

.toolbar { display: flex; align-items: center; width: fit-content; height: 27px; padding-right: 5px; background: linear-gradient(#f9f8f6, #ebe9e5 50%, #d8d5ce); }
.grip { width: 2px; height: 20px; margin: 0 5px 0 4px; background: repeating-linear-gradient(#77746e 0 2px, transparent 2px 4px); }
.tool { width: 23px; height: 23px; }
.tool.on { background: linear-gradient(#c3c8d8, #adb2c2); }
.drop { width: 11px; height: 23px; }
.drop::before { content: ""; border: 3px solid transparent; border-top-color: #000; border-bottom: 0; }
.drop.off::before { border-top-color: #77746e; }
.sep { width: 8px; height: 13px; background: linear-gradient(90deg, transparent 4px, #a8a49c 4px 5px, transparent 5px); }

.combo { position: relative; height: 21px; margin-right: 9px; background: #fff; border: 2px solid; border-color: #55534f #fff #fff #55534f; }
.combo select { appearance: none; display: block; width: 100%; height: 100%; padding: 1px 18px 0 1px; outline: 0; }
.combo::after { content: ""; position: absolute; top: 0; right: 0; bottom: 0; width: 16px; background: linear-gradient(#000, #000) 5px 6px / 7px 1px no-repeat, linear-gradient(#000, #000) 6px 7px / 5px 1px no-repeat, linear-gradient(#000, #000) 7px 8px / 3px 1px no-repeat, linear-gradient(#000, #000) 8px 9px / 1px 1px no-repeat, var(--face); box-shadow: inset -1px -1px #404040, inset 1px 1px #fff, inset -2px -2px #808080; pointer-events: none; }
.w-style { width: 130px; margin-left: 9px; }
.w-font { width: 116px; }
.w-size { width: 58px; margin-right: 8px; }
.combo.big { height: 25px; margin-right: 0; }
.combo.big::after { background-position: 5px 8px, 6px 9px, 7px 10px, 8px 11px, 0 0; }
.combo.grow { flex: 1; }
.combo.w-size2 { width: 59px; }

.work { position: relative; flex: 1; display: grid; grid-template-columns: 1fr 9px 230px 37px; min-height: 0; }
.editor { display: grid; grid-template-columns: 1fr 16px; grid-template-rows: 1fr 16px; min-width: 0; border-left: 1px solid #a8a49c; }
.canvas { position: relative; display: grid; grid-template-columns: 42px 1fr; grid-template-rows: 42px 1fr; overflow: hidden; background: #f0f0f0; }
.hruler { grid-area: 1 / 1 / 2 / 3; width: 100%; height: 42px; margin-left: -1px; }
.vruler { grid-area: 1 / 1 / 3 / 2; width: 42px; height: 100%; }
.hruler text, .vruler text { font-size: 11px; fill: #444; text-anchor: middle; }
.hruler path, .vruler path { stroke: #777; fill: none; }
.hruler path.tab { stroke: #333; }
.hruler path.stop { stroke: #333; stroke-width: 2px; }
.hruler path.marker { stroke: #333; fill: #fff; }
.margin { fill: #f0f0f0; stroke: #808080; }
.page { position: relative; grid-area: 2 / 2; background: #fff; border-top: 2px solid #c4c4c4; border-left: 1px solid #c4c4c4; box-shadow: -2px 0 4px #ccc; outline: 0; }
.crop { position: absolute; top: 62px; width: 15px; height: 15px; border-bottom: 1px solid #c4c4c4; }
.tl { left: 63px; border-right: 1px solid #c4c4c4; }
.tr { left: 719px; border-left: 1px solid #c4c4c4; }

.vscroll { display: flex; flex-direction: column; border-right: 1px solid #404040; background: #e8e6e2; }
.hscroll { grid-column: 1 / 3; display: flex; padding-right: 16px; background: var(--face); }
.sb, .thumb { background: var(--face); box-shadow: inset -1px -1px #404040, inset 1px 1px #fff, inset -2px -2px #808080; }
.sb { width: 15px; height: 16px; }
.hscroll .sb { width: 16px; }
.sb svg { width: 8px; height: 4px; }
.sb svg.tall { height: 8px; }
.sb svg.side { width: 4px; height: 8px; }
.vt { flex: 0 0 193px; }
.ht { flex: 1 1 0; }
.track { flex: 1; background: #e8e6e2; }
.hscroll .track { flex: 0 0 27px; }

.splitter, .deck, .decktabs { margin-bottom: 1px; border-bottom: 1px solid #808080; }
.splitter { display: flex; align-items: center; border-top: 1px solid #808080; background: linear-gradient(90deg, var(--face) 5px, #808080 5px 6px, var(--face) 6px 7px, #fff 7px 8px, var(--face) 8px); }
.splitter svg { width: 4px; height: 36px; }

.deck { border: 1px solid #c2beb6; border-top-color: #808080; border-bottom-color: #808080; min-width: 0; }
.deckhead { display: flex; align-items: center; justify-content: space-between; height: 30px; padding: 7px 4px 0 9px; }
.deckhead .cross { margin-bottom: 7px; }
.head { display: flex; align-items: center; height: 27px; padding: 4px 4px 0 5px; gap: 4px; background: linear-gradient(#c4c0b8, var(--face)); color: #222; }
.toggle { width: 9px; height: 9px; margin-bottom: 2px; border: 1px solid #7890a8; background: linear-gradient(#222, #222) center / 5px 1px no-repeat, #f2f4f6; }
.toggle.plus { background: linear-gradient(#222, #222) center / 5px 1px no-repeat, linear-gradient(#222, #222) center / 1px 5px no-repeat, #f2f4f6; }
.more { margin-left: auto; margin-bottom: 10px; }
.more svg { width: 12px; height: 11px; }
.row { display: flex; align-items: center; }
.push { margin-left: auto; }
.chars { padding: 6px 1px 0 6px; height: 108px; }
.fonts { gap: 12px; margin-bottom: 11px; }
.tools { height: 23px; margin: 0 0 12px -1px; }
.kern { margin-right: 11px; }
.para { height: 198px; padding: 4px 6px 0 6px; }
.aligns { height: 25px; margin-bottom: 6px; }
.aligns .on { width: 24px; height: 24px; }
.first { width: 24px; }
.nudge { margin-left: -1px; }
.halves { display: grid; grid-template-columns: 110px 1fr; align-items: center; }
.lists { height: 23px; }
.narrow { width: 20px; }
.swatch { width: 68px; height: 12px; margin-left: 2px; border: 1px solid #000; }
.drop.wide { width: 21px; }
.captions { height: 26px; padding-top: 2px; }
.spaces { height: 23px; margin-bottom: 8px; }
.hang { width: 28px; }
.hang svg { width: 20px; height: 16px; }
.fields { display: grid; grid-template-columns: 16px 82px 17px 82px; align-items: center; column-gap: 6px; row-gap: 6px; }
.spin { display: flex; height: 21px; background: #fff; border: 2px solid; border-color: #55534f #fff #fff #55534f; }
.spin input { flex: 1; min-width: 0; padding: 1px 0 0 1px; outline: 0; }
.spin div { display: grid; grid-template-rows: 1fr 1fr; width: 15px; }
.spin button { background: var(--face); box-shadow: inset -1px -1px #404040, inset 1px 1px #fff; }
.spin button::before { content: ""; border: 2px solid transparent; border-top-color: #000; border-bottom: 0; }
.spin .up::before { border: 2px solid transparent; border-bottom-color: #000; border-top: 0; }
.spin.strong button::before { border-left-width: 3px; border-right-width: 3px; }
.spin.strong button:not(.up)::before { border-top-width: 3px; }
.spin.strong .up::before { border-bottom-width: 3px; }
.linesp { grid-column: 1 / 3; padding-left: 3px; }
.linesp svg { width: 18px; height: 16px; }
.linesp .drop { width: 16px; }
.last { border-bottom: 1px solid #c2beb6; }

.decktabs { display: flex; flex-direction: column; align-items: center; gap: 13px; border-top: 1px solid #808080; padding: 1px 0 0 3px; }
.decktabs :deep(.icon) { width: 22px; height: 22px; }
.decktabs .menu { height: 38px; width: 24px; border-bottom: 1px solid #bcb8b0; margin-bottom: -6px; }
.decktabs .menu svg { width: 10px; height: 10px; }
.highlight { position: absolute; right: 250px; top: 234px; width: 54px; height: 81px; pointer-events: none; }

.status { display: flex; align-items: center; height: 23px; border-bottom: 1px solid #fff; }
.status span { display: flex; align-items: center; height: 16px; border-right: 1px solid #808080; box-shadow: 1px 0 #fff; padding: 2px 0 0 8px; white-space: nowrap; }
.s-page { width: 115px; }
.status .s-page { padding-left: 10px; }
.s-words { width: 172px; }
.s-style { width: 117px; }
.s-lang { width: 139px; }
.status .s-lang { padding-left: 27px; }
.s-gap { width: 68px; }
.s-cell { width: 29px; }
.s-cell svg { width: 14px; height: 12px; }
.s-rest { flex: 1; }
.s-views { width: 76px; }
.status .s-views { padding-left: 12px; }
.s-views svg { width: 54px; height: 12px; }
.s-zoom { width: 142px; justify-content: space-between; }
.status .s-zoom { padding: 1px 7px 0 8px; }
.s-zoom button { width: 8px; height: 8px; }
.s-zoom .minus { background: linear-gradient(#77746e, #77746e) center / 8px 2px no-repeat; }
.s-zoom .plus { background: linear-gradient(#77746e, #77746e) center / 8px 2px no-repeat, linear-gradient(#77746e, #77746e) center / 2px 8px no-repeat; }
.s-zoom input { appearance: none; width: 97px; height: 12px; background: linear-gradient(#77746e, #77746e) 12px 1px / 2px 10px no-repeat, linear-gradient(#77746e, #77746e) 0 5px / 100% 2px no-repeat; outline: 0; }
.s-zoom input::-webkit-slider-thumb { appearance: none; width: 8px; height: 8px; border: 1px solid #77746e; border-radius: 50%; background: #fff; }
.s-pct { width: 43px; }
.status .s-pct { border: 0; box-shadow: none; padding-left: 6px; }

.taskbar { position: relative; display: flex; align-items: center; height: 26px; padding-left: 3px; }
.start { gap: 1px; width: 59px; height: 22px; font-weight: 700; background: var(--face); box-shadow: inset -1px -1px #404040, inset 1px 1px #fff, inset -2px -2px #808080; }
.launch { display: flex; gap: 7px; margin-left: 7px; }
.task { justify-content: flex-start; gap: 2px; width: 160px; height: 22px; margin-left: 31px; padding: 1px 0 0 5px; font-weight: 700; white-space: nowrap; background: repeating-conic-gradient(#fff 0 25%, #d4d0c8 0 50%) 0 0 / 2px 2px; border: 1px solid; border-color: #404040 #fff #fff #404040; box-shadow: inset 1px 1px #808080; }
.tray { display: flex; align-items: center; gap: 2px; width: 112px; height: 22px; margin-left: auto; padding-left: 4px; border: 1px solid; border-color: #808080 transparent #fff #808080; }
.chev { font-size: 14px; font-weight: 700; }
.tray :deep(.icon:last-of-type) { margin-left: 2px; }
.tray time { margin-left: 5px; }
.pointer { position: absolute; left: 552px; top: 20px; width: 12px; height: 18px; }
</style>
